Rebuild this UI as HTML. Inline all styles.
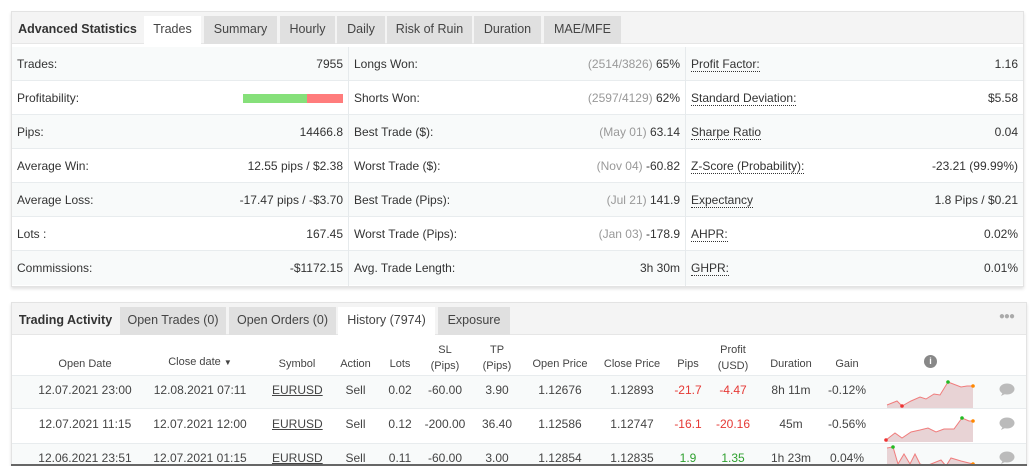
<!DOCTYPE html>
<html><head><meta charset="utf-8"><style>
*{box-sizing:border-box;margin:0;padding:0}
html,body{width:1030px;height:466px;overflow:hidden}
body{background:#fff;font-family:"Liberation Sans",sans-serif;font-size:12px;color:#333;position:relative}
.p{position:absolute;border:1px solid #e3e3e3;background:#fff;box-shadow:0 2px 3px rgba(0,0,0,.12)}
.tabs{position:absolute;left:0;right:0;top:0;height:32px;background:#f4f4f4;border-bottom:1px solid #e6e6e6}
.t{position:absolute;top:4px;height:28px;background:#e0e0e0;text-align:center;line-height:26px;font-size:12.5px;color:#444}
.t.a{background:#fff;height:29px}
.t.h{background:none;font-weight:bold;color:#333}
.row{position:absolute;left:0;right:0;height:34px;border-bottom:1px solid #e8ecee}
.c{position:absolute;top:0;height:34px;line-height:33px}
.gray{color:#999}
.dot{border-bottom:1px dotted #333;line-height:14px;display:inline-block}
.vd{position:absolute;top:34px;bottom:0;width:1px;background:#e6eaec}
.td{position:absolute;text-align:center;white-space:nowrap}
.red{color:#e53935}.grn{color:#2ea02e}
u{text-decoration:underline}
</style></head><body>

<div class="p" style="left:11px;top:11px;width:1013px;height:276px">
 <div class="tabs">
  <div class="t h" style="left:0;width:131px;font-weight:600">Advanced Statistics</div>
  <div class="t a" style="left:132px;width:57px">Trades</div>
  <div class="t" style="left:192px;width:73px">Summary</div>
  <div class="t" style="left:268px;width:55px">Hourly</div>
  <div class="t" style="left:325px;width:48px">Daily</div>
  <div class="t" style="left:375px;width:85px">Risk of Ruin</div>
  <div class="t" style="left:462px;width:67px">Duration</div>
  <div class="t" style="left:532px;width:77px">MAE/MFE</div>
 </div>
 <div style="position:absolute;left:0;right:0;top:35px;bottom:0">
  <div class="row" style="top:0;background:#f8fafa"></div>
  <div class="row" style="top:34px"></div>
  <div class="row" style="top:68px;background:#f8fafa"></div>
  <div class="row" style="top:102px"></div>
  <div class="row" style="top:136px;background:#f8fafa"></div>
  <div class="row" style="top:170px"></div>
  <div class="row" style="top:204px;background:#f8fafa;border:0"></div>
  <div class="vd" style="left:336px;top:0"></div>
  <div class="vd" style="left:673px;top:0"></div>
 </div>
</div>

<div style="position:absolute;left:0;top:48px;width:1030px">
 <div style="position:absolute;left:17px;width:326px">
  <div class="c" style="top:0;left:0;width:326px">Trades:<span style="float:right">7955</span></div>
  <div class="c" style="top:34px;left:0;width:326px">Profitability:<span style="float:right;margin-top:12px;width:100px;height:9px;background:#86e07a;position:relative"><span style="position:absolute;right:0;top:0;width:36px;height:9px;background:#ff7c7c"></span></span></div>
  <div class="c" style="top:68px;left:0;width:326px">Pips:<span style="float:right">14466.8</span></div>
  <div class="c" style="top:102px;left:0;width:326px">Average Win:<span style="float:right">12.55 pips / $2.38</span></div>
  <div class="c" style="top:136px;left:0;width:326px">Average Loss:<span style="float:right">-17.47 pips / -$3.70</span></div>
  <div class="c" style="top:170px;left:0;width:326px">Lots :<span style="float:right">167.45</span></div>
  <div class="c" style="top:204px;left:0;width:326px">Commissions:<span style="float:right">-$1172.15</span></div>
 </div>
 <div style="position:absolute;left:354px;width:326px">
  <div class="c" style="top:0;left:0;width:326px">Longs Won:<span style="float:right"><span class="gray">(2514/3826)</span> 65%</span></div>
  <div class="c" style="top:34px;left:0;width:326px">Shorts Won:<span style="float:right"><span class="gray">(2597/4129)</span> 62%</span></div>
  <div class="c" style="top:68px;left:0;width:326px">Best Trade ($):<span style="float:right"><span class="gray">(May 01)</span> 63.14</span></div>
  <div class="c" style="top:102px;left:0;width:326px">Worst Trade ($):<span style="float:right"><span class="gray">(Nov 04)</span> -60.82</span></div>
  <div class="c" style="top:136px;left:0;width:326px">Best Trade (Pips):<span style="float:right"><span class="gray">(Jul 21)</span> 141.9</span></div>
  <div class="c" style="top:170px;left:0;width:326px">Worst Trade (Pips):<span style="float:right"><span class="gray">(Jan 03)</span> -178.9</span></div>
  <div class="c" style="top:204px;left:0;width:326px">Avg. Trade Length:<span style="float:right">3h 30m</span></div>
 </div>
 <div style="position:absolute;left:691px;width:327px">
  <div class="c" style="top:0;left:0;width:327px"><span class="dot">Profit Factor:</span><span style="float:right">1.16</span></div>
  <div class="c" style="top:34px;left:0;width:327px"><span class="dot">Standard Deviation:</span><span style="float:right">$5.58</span></div>
  <div class="c" style="top:68px;left:0;width:327px"><span class="dot">Sharpe Ratio</span><span style="float:right">0.04</span></div>
  <div class="c" style="top:102px;left:0;width:327px"><span class="dot">Z-Score (Probability):</span><span style="float:right">-23.21 (99.99%)</span></div>
  <div class="c" style="top:136px;left:0;width:327px"><span class="dot">Expectancy</span><span style="float:right">1.8 Pips / $0.21</span></div>
  <div class="c" style="top:170px;left:0;width:327px"><span class="dot">AHPR:</span><span style="float:right">0.02%</span></div>
  <div class="c" style="top:204px;left:0;width:327px"><span class="dot">GHPR:</span><span style="float:right">0.01%</span></div>
 </div>
</div>

<div class="p" style="left:11px;top:302px;width:1016px;height:164px;border-bottom:0">
 <div class="tabs">
  <div class="t h" style="left:0;width:107px;font-weight:600">Trading Activity</div>
  <div class="t" style="left:108px;width:106px">Open Trades (0)</div>
  <div class="t" style="left:217px;width:107px">Open Orders (0)</div>
  <div class="t a" style="left:326px;width:97px">History (7974)</div>
  <div class="t" style="left:426px;width:72px">Exposure</div>
  <div style="position:absolute;right:12px;top:8px;color:#aaa;font-size:10px;letter-spacing:-1px">●●●</div>
 </div>
 <div style="position:absolute;left:0;right:0;top:72px;height:34px;background:#f8fafa;border-top:1px solid #e8ecee;border-bottom:1px solid #e8ecee"></div>
 <div style="position:absolute;left:0;right:0;top:140px;height:24px;background:#f8fafa;border-top:1px solid #e8ecee"></div>
</div>

<div style="position:absolute;left:0;top:0;width:1030px;font-size:11px;color:#444">
 <div class="td" style="left:45px;width:80px;top:358px">Open Date</div>
 <div class="td" style="left:155px;width:90px;top:356px">Close date <span style="font-size:8px">▼</span></div>
 <div class="td" style="left:272px;width:50px;top:358px">Symbol</div>
 <div class="td" style="left:333px;width:45px;top:358px">Action</div>
 <div class="td" style="left:385px;width:30px;top:358px">Lots</div>
 <div class="td" style="left:425px;width:40px;top:342px;line-height:16px">SL<br>(Pips)</div>
 <div class="td" style="left:477px;width:40px;top:342px;line-height:16px">TP<br>(Pips)</div>
 <div class="td" style="left:528px;width:64px;top:358px">Open Price</div>
 <div class="td" style="left:600px;width:64px;top:358px">Close Price</div>
 <div class="td" style="left:673px;width:30px;top:358px">Pips</div>
 <div class="td" style="left:713px;width:40px;top:342px;line-height:16px">Profit<br>(USD)</div>
 <div class="td" style="left:765px;width:52px;top:358px">Duration</div>
 <div class="td" style="left:827px;width:40px;top:358px">Gain</div>
 <div class="td" style="left:924px;top:355px;width:13px;height:13px;border-radius:50%;background:#888;color:#fff;font-size:9px;line-height:13px;font-weight:bold">i</div>
</div>

<div style="position:absolute;left:0;top:0;width:1030px;font-size:12px;color:#444">
 <div class="td" style="left:30px;width:110px;top:383px">12.07.2021 23:00</div>
 <div class="td" style="left:150px;width:100px;top:383px">12.08.2021 07:11</div>
 <div class="td" style="left:272px;width:50px;top:383px"><u>EURUSD</u></div>
 <div class="td" style="left:333px;width:45px;top:383px">Sell</div>
 <div class="td" style="left:385px;width:30px;top:383px">0.02</div>
 <div class="td" style="left:420px;width:50px;top:383px">-60.00</div>
 <div class="td" style="left:477px;width:40px;top:383px">3.90</div>
 <div class="td" style="left:528px;width:64px;top:383px">1.12676</div>
 <div class="td" style="left:600px;width:64px;top:383px">1.12893</div>
 <div class="td red" style="left:670px;width:36px;top:383px">-21.7</div>
 <div class="td red" style="left:710px;width:46px;top:383px">-4.47</div>
 <div class="td" style="left:760px;width:62px;top:383px">8h 11m</div>
 <div class="td" style="left:822px;width:50px;top:383px">-0.12%</div>

 <div class="td" style="left:30px;width:110px;top:417px">12.07.2021 11:15</div>
 <div class="td" style="left:150px;width:100px;top:417px">12.07.2021 12:00</div>
 <div class="td" style="left:272px;width:50px;top:417px"><u>EURUSD</u></div>
 <div class="td" style="left:333px;width:45px;top:417px">Sell</div>
 <div class="td" style="left:385px;width:30px;top:417px">0.12</div>
 <div class="td" style="left:420px;width:50px;top:417px">-200.00</div>
 <div class="td" style="left:477px;width:40px;top:417px">36.40</div>
 <div class="td" style="left:528px;width:64px;top:417px">1.12586</div>
 <div class="td" style="left:600px;width:64px;top:417px">1.12747</div>
 <div class="td red" style="left:670px;width:36px;top:417px">-16.1</div>
 <div class="td red" style="left:710px;width:46px;top:417px">-20.16</div>
 <div class="td" style="left:760px;width:62px;top:417px">45m</div>
 <div class="td" style="left:822px;width:50px;top:417px">-0.56%</div>

 <div class="td" style="left:30px;width:110px;top:451px">12.06.2021 23:51</div>
 <div class="td" style="left:150px;width:100px;top:451px">12.07.2021 01:15</div>
 <div class="td" style="left:272px;width:50px;top:451px"><u>EURUSD</u></div>
 <div class="td" style="left:333px;width:45px;top:451px">Sell</div>
 <div class="td" style="left:385px;width:30px;top:451px">0.11</div>
 <div class="td" style="left:420px;width:50px;top:451px">-60.00</div>
 <div class="td" style="left:477px;width:40px;top:451px">3.00</div>
 <div class="td" style="left:528px;width:64px;top:451px">1.12854</div>
 <div class="td" style="left:600px;width:64px;top:451px">1.12835</div>
 <div class="td grn" style="left:670px;width:36px;top:451px">1.9</div>
 <div class="td grn" style="left:710px;width:46px;top:451px">1.35</div>
 <div class="td" style="left:760px;width:62px;top:451px">1h 23m</div>
 <div class="td" style="left:822px;width:50px;top:451px">0.04%</div>
</div>

<svg style="position:absolute;left:886px;top:376px" width="90" height="32">
 <path d="M1,29 L11,25 L16,30 L25,25 L34,21 L40,23 L48,18 L54,19 L62,6 L75,11 L81,10 L87,10 L87,32 L1,32Z" fill="#e8d3d5"/>
 <polyline points="1,29 11,25 16,30 25,25 34,21 40,23 48,18 54,19 62,6 75,11 81,10 87,10" fill="none" stroke="#f07c7c" stroke-width="1"/>
 <circle cx="16" cy="30" r="1.8" fill="#e33"/><circle cx="62" cy="6" r="1.8" fill="#2b2"/><circle cx="87" cy="10" r="1.8" fill="#f80"/>
</svg>
<svg style="position:absolute;left:884px;top:410px" width="92" height="32">
 <path d="M2,30 L11,23 L18,28 L27,22 L36,20 L44,18 L52,22 L60,19 L70,19 L78,8 L85,11 L89,11 L89,32 L2,32Z" fill="#e8d3d5"/>
 <polyline points="2,30 11,23 18,28 27,22 36,20 44,18 52,22 60,19 70,19 78,8 85,11 89,11" fill="none" stroke="#f07c7c" stroke-width="1"/>
 <circle cx="2" cy="30" r="1.8" fill="#e33"/><circle cx="78" cy="8" r="1.8" fill="#2b2"/><circle cx="89" cy="11" r="1.8" fill="#f80"/>
</svg>
<svg style="position:absolute;left:886px;top:444px" width="90" height="22">
 <path d="M1,4 L7,3 L12,20 L18,10 L24,20 L29,10 L34,20 L40,22 L55,16 L60,22 L65,14 L75,17 L87,20 L87,22 L1,22Z" fill="#e8d3d5"/>
 <polyline points="1,4 7,3 12,20 18,10 24,20 29,10 34,20 40,22 55,16 60,22 65,14 75,17 87,20" fill="none" stroke="#f07c7c" stroke-width="1"/>
 <circle cx="7" cy="3" r="1.8" fill="#2b2"/><circle cx="87" cy="20" r="1.8" fill="#f80"/>
</svg>

<svg style="position:absolute;left:999px;top:383px" width="16" height="14"><ellipse cx="8" cy="6" rx="7.5" ry="5.5" fill="#bbb"/><path d="M4,9 L2,13 L8,10Z" fill="#bbb"/></svg>
<svg style="position:absolute;left:999px;top:417px" width="16" height="14"><ellipse cx="8" cy="6" rx="7.5" ry="5.5" fill="#bbb"/><path d="M4,9 L2,13 L8,10Z" fill="#bbb"/></svg>
<svg style="position:absolute;left:999px;top:451px" width="16" height="14"><ellipse cx="8" cy="6" rx="7.5" ry="5.5" fill="#bbb"/><path d="M4,9 L2,13 L8,10Z" fill="#bbb"/></svg>

<div style="position:absolute;left:11px;top:464px;width:1016px;height:2px;background:#666"></div>
</body></html>
